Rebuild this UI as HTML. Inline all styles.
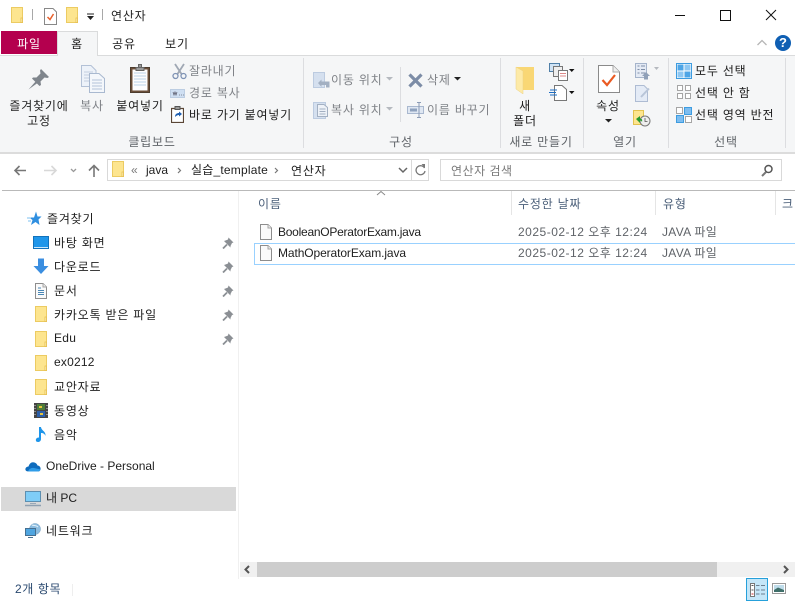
<!DOCTYPE html>
<html lang="ko"><head><meta charset="utf-8">
<style>
html,body{margin:0;padding:0;background:#fff}
#w{position:relative;width:795px;height:602px;overflow:hidden;background:#fff;font:12px/16px "Liberation Sans","Noto Sans CJK KR",sans-serif;color:#1e1e1e}
#w div,#w svg{position:absolute}
.t{position:absolute;white-space:nowrap;line-height:16px;height:16px;margin-top:-7px;letter-spacing:.8px}
.l{letter-spacing:0;margin-top:-8px}
.c{transform:translateX(-50%)}
.g{color:#7f8287}
.m{color:#5f6368}
.sep{width:1px;background:#dcdde0}
</style></head><body>
<div id="w">
<svg width="0" height="0" style="position:absolute"><defs>
<g id="fo"><path d="M.5.5H11.5V15.5H.5Z" fill="#fde58f" stroke="#eccb62"/><path d="M10 11v4.500h1.500V11z" fill="#fff3c0" stroke="#e6bf4f" stroke-width=".8"/></g>
<g id="pin"><path d="M6.500.5 11.500 5.500 10 6 8.500 9 8.500 10.500 2 4 3.500 3.500 6 2.500Z" fill="#8b8f94"/><path d="M5 7.500 1 11.500" stroke="#8b8f94" stroke-width="1.800"/></g>
<g id="doc"><path d="M.5.5H8L11.500 4V15.500H.5Z" fill="#fafafa" stroke="#8d8d8d"/><path d="M8 .5V4H11.500" fill="#eee" stroke="#a5a5a5"/></g>
</defs></svg>

<!-- title bar -->
<svg style="left:11px;top:7px" width="12" height="16"><use href="#fo"/></svg>
<div class="sep" style="left:32px;top:9px;height:11px;background:#a8a8a8"></div>
<svg style="left:44px;top:8px" width="13" height="17"><path d="M.5.5H9L12.500 4V16.500H.5Z" fill="#fff" stroke="#888"/><path d="M3.500 9 6 11.500 9.500 6" fill="none" stroke="#e8602c" stroke-width="1.500"/></svg>
<svg style="left:66px;top:7px" width="12" height="16"><use href="#fo"/></svg>
<svg style="left:86px;top:13px" width="9" height="8"><path d="M1 1H8" stroke="#222"/><path d="M1 3H8L4.500 7Z" fill="#222"/></svg>
<div class="sep" style="left:102px;top:9px;height:11px;background:#a8a8a8"></div>
<span class="t" style="left:111px;top:15px;color:#222">연산자</span>
<svg style="left:670px;top:5px" width="115" height="20"><path d="M5 10.500H15" stroke="#111"/><path d="M50.500 5.500H60.500V15.500H50.500Z" fill="none" stroke="#111"/><path d="M96 5 106 15M106 5 96 15" stroke="#111"/></svg>

<!-- tabs -->
<div style="left:1px;top:31px;width:56px;height:23px;background:#b4004e"></div>
<span class="t c" style="left:29px;top:43px;color:#fff">파일</span>
<div style="left:57px;top:31px;width:39px;height:24px;background:#f5f6f7;border:1px solid #dadbdc;border-bottom:0;z-index:2"></div>
<span class="t c" style="left:77px;top:43px;z-index:3">홈</span>
<span class="t c" style="left:124px;top:43px">공유</span>
<span class="t c" style="left:177px;top:43px">보기</span>
<svg style="left:756px;top:38px" width="12" height="9"><path d="M1.500 7 6 2.500 10.500 7" fill="none" stroke="#b5b5b5" stroke-width="1.300"/></svg>
<div style="left:775px;top:35px;width:16px;height:16px;border-radius:50%;background:#0f5fb3;color:#fff;font:bold 13px/16px 'Liberation Sans',sans-serif;text-align:center">?</div>

<!-- ribbon -->
<div style="left:0;top:55px;width:795px;background:#f5f6f7;border-top:1px solid #dadbdc;border-bottom:2px solid #dcdcdc;box-sizing:border-box;height:99px"></div>
<div class="sep" style="left:303px;top:58px;height:90px"></div>
<div class="sep" style="left:500px;top:58px;height:90px"></div>
<div class="sep" style="left:583px;top:58px;height:90px"></div>
<div class="sep" style="left:668px;top:58px;height:90px"></div>
<div class="sep" style="left:785px;top:58px;height:90px"></div>
<div class="sep" style="left:400px;top:67px;height:55px"></div>

<svg style="left:28px;top:68px" width="22" height="22"><path d="M13 1 21 9 19.500 10 16.500 9.500 12.500 13.500 13 17 11.500 18 4 10.500 5 9.500 8.500 9.500 12.500 5.500 12 2.500Z" fill="#7f858c"/><path d="M8 13 .5 21.500 9.500 15Z" fill="#7f858c"/></svg>
<svg style="left:80px;top:64px" width="26" height="30"><path d="M1.500 1.500H11L16 6.500V22.500H1.500Z" fill="#edf2f9" stroke="#b3c1d6"/><path d="M4 8H13M4 11H13M4 14H13M4 17H13" stroke="#c3cfe0"/><path d="M9.500 9.500H19L24.500 14.500V28.500H9.500Z" fill="#f4f7fb" stroke="#a9b9d0"/><path d="M12 16H22M12 19H22M12 22H22M12 25H22" stroke="#b5c3d8"/></svg>
<svg style="left:129px;top:63px" width="22" height="31"><path d="M1.500 4.500H20.500V29.500H1.500Z" fill="#6b4f3a" stroke="#4d3d2f"/><path d="M3.500 6.500H18.500V27.500H3.500Z" fill="#fdfdff"/><path d="M5 10H17M5 13H17M5 16H17M5 19H17M5 22H17" stroke="#bcd2ea"/><path d="M7 4.500H15V7.500H7ZM9.500 1.500H12.500V4.500H9.500Z" fill="#9a9a9a" stroke="#666"/></svg>
<svg style="left:172px;top:63px" width="15" height="17"><path d="M3 1 9.500 11M12 1 5.500 11" stroke="#a0a8b4" stroke-width="1.800"/><circle cx="3.500" cy="13" r="2.500" fill="none" stroke="#7f93b5" stroke-width="1.300"/><circle cx="11.500" cy="13" r="2.500" fill="none" stroke="#7f93b5" stroke-width="1.300"/></svg>
<svg style="left:170px;top:89px" width="15" height="9"><rect x=".5" y=".5" width="14" height="8" fill="#cfdff2" stroke="#bccde2"/><path d="M3 3l1 3 1-3 1 3 1-3M9 6h.8M11 6h.8M13 6h.8" fill="none" stroke="#556" stroke-width=".7"/></svg>
<svg style="left:171px;top:106px" width="13" height="17"><path d="M.5 2.500H12.500V16.500H.5Z" fill="#fff" stroke="#5a4636" stroke-width="1.200"/><path d="M4 .5H9V3.500H4Z" fill="#999" stroke="#555"/><path d="M4 11C4 8 6 7 8 7V5.500L11 8 8 10.500V9C6.500 9 5 10 4 11Z" fill="#1f5fb0"/></svg>

<span class="t c" style="left:39px;top:105px">즐겨찾기에</span>
<span class="t c" style="left:39px;top:120px">고정</span>
<span class="t c g" style="left:92px;top:105px">복사</span>
<span class="t c" style="left:140px;top:105px">붙여넣기</span>
<span class="t g" style="left:189px;top:70px">잘라내기</span>
<span class="t g" style="left:189px;top:92px">경로 복사</span>
<span class="t" style="left:189px;top:114px">바로 가기 붙여넣기</span>
<span class="t c m" style="left:152px;top:141px">클립보드</span>

<svg style="left:313px;top:72px" width="17" height="17"><path d="M.5.5H11.500V15.500H.5Z" fill="#d5e0ef" stroke="#bccbe0"/><path d="M13 9.500H16.500V15.500H13ZM5 11 8.500 7.500V9.500H13V13H8.500V15Z" fill="#a3b0c2"/></svg>
<span class="t g" style="left:331px;top:79px">이동 위치</span>
<svg style="left:386px;top:77px" width="7" height="4"><path d="M0 0H7L3.500 3.500Z" fill="#b5b9bf"/></svg>
<svg style="left:313px;top:102px" width="17" height="17"><path d="M.5.5H12.500V16.500H.5Z" fill="#d5e0ef" stroke="#bccbe0"/><path d="M4.500 2.500H11L14.500 5.500V14.500H4.500Z" fill="#eef2f8" stroke="#a3b0c2"/><path d="M6.500 7H12.500M6.500 9.500H12.500M6.500 12H12.500" stroke="#a3b0c2"/></svg>
<span class="t g" style="left:331px;top:109px">복사 위치</span>
<svg style="left:386px;top:107px" width="7" height="4"><path d="M0 0H7L3.500 3.500Z" fill="#b5b9bf"/></svg>
<svg style="left:408px;top:73px" width="15" height="15"><path d="M1.500 1.500 13.500 13.500M13.500 1.500 1.500 13.500" stroke="#7c8ca6" stroke-width="3.200"/></svg>
<span class="t g" style="left:427px;top:79px">삭제</span>
<svg style="left:454px;top:77px" width="7" height="4"><path d="M0 0H7L3.500 3.500Z" fill="#222"/></svg>
<svg style="left:407px;top:102px" width="17" height="16"><path d="M.5 4.500H16.500V11.500H.5Z" fill="#dfe7f2" stroke="#a9b8cf"/><path d="M3 6.500H10V9.500H3Z" fill="#8fa2bd"/><path d="M10 .5H14M12 .5V15.500M10 15.500H14" stroke="#8b9bb5"/></svg>
<span class="t g" style="left:427px;top:109px">이름 바꾸기</span>
<span class="t c m" style="left:401px;top:141px">구성</span>

<svg style="left:515px;top:66px" width="20" height="28"><path d="M1 1H19V24H8Z" fill="#f9d775"/><path d="M1 1 8 5V28L1 23Z" fill="#fdeaa8" stroke="#ecd183" stroke-width=".5"/></svg>
<span class="t c" style="left:525px;top:105px">새</span>
<span class="t c" style="left:525px;top:120px">폴더</span>
<span class="t c m" style="left:541px;top:141px">새로 만들기</span>
<svg style="left:549px;top:63px" width="26" height="18"><rect x=".5" y=".5" width="10" height="8" fill="#cfe3f5" stroke="#4f7fa8"/><rect x="4.500" y="3.500" width="9" height="10" fill="#eee" stroke="#777"/><rect x="9.500" y="7.500" width="9" height="10" fill="#fff" stroke="#777"/><path d="M11 10.500H17M11 13H17" stroke="#d88"/><path d="M20 6H25.500L22.750 9Z" fill="#111"/></svg>
<svg style="left:549px;top:85px" width="26" height="16"><path d="M5.500.5H13L17.500 4.500V15.500H5.500Z" fill="#fff" stroke="#777"/><path d="M1 5H8M0 7.500H7M1 10H8" stroke="#1e6fc5"/><path d="M20 6H25.500L22.750 9Z" fill="#111"/></svg>

<svg style="left:598px;top:65px" width="22" height="29"><path d="M.5.5H15L21.500 7V27.500H.5Z" fill="#fff" stroke="#8a8a8a"/><path d="M15 .5V7H21.500" fill="#eee" stroke="#aaa"/><path d="M4.500 15 9 20 17 10" fill="none" stroke="#ea5a22" stroke-width="2.200"/></svg>
<span class="t c" style="left:608px;top:105px">속성</span>
<svg style="left:605px;top:119px" width="7" height="4"><path d="M0 0H7L3.500 3.500Z" fill="#222"/></svg>
<svg style="left:635px;top:63px" width="25" height="17"><path d="M.5.5H11.500V14.500H.5Z" fill="#e4eaf4" stroke="#a5b4cb"/><path d="M2.500 3H4.500M2.500 6.500H4.500M2.500 10H4.500M6 3H10M6 6.500H10M6 10H10" stroke="#7e8ea7"/><path d="M7 13 11 9 15 13H13V16.500H9V13Z" fill="#8fa0b8"/><path d="M19 4H24L21.500 7Z" fill="#b5b9bf"/></svg>
<svg style="left:635px;top:85px" width="17" height="18"><path d="M.5.5H9L12.500 4V16.500H.5Z" fill="#e4ebf6" stroke="#aebcd3"/><path d="M6 12 14 3.500" stroke="#b8c5d8" stroke-width="2"/></svg>
<svg style="left:633px;top:110px" width="18" height="17"><path d="M.5.5H10.500V14.500H.5Z" fill="#fde58f" stroke="#e3c24f"/><circle cx="12" cy="11" r="5" fill="#eee" stroke="#777"/><path d="M12 8V11.500H14.500" fill="none" stroke="#555" stroke-width=".8"/><path d="M3 9 7 6V8.500C9 8.500 9.500 10 9 12 8.500 11 8 10.500 7 10.500V13Z" fill="#2a9a2f"/></svg>
<span class="t c m" style="left:625px;top:141px">열기</span>

<svg style="left:676px;top:63px" width="16" height="16"><rect x=".5" y=".5" width="15" height="15" fill="#fff" stroke="#3d9ce0"/><rect x="1.500" y="1.500" width="6" height="6" fill="#4ea5e6"/><rect x="8.500" y="1.500" width="6" height="6" fill="#8ec7f2"/><rect x="1.500" y="8.500" width="6" height="6" fill="#8ec7f2"/><rect x="8.500" y="8.500" width="6" height="6" fill="#4ea5e6"/></svg>
<svg style="left:677px;top:85px" width="15" height="15"><g fill="#fff" stroke="#a5a5a5"><rect x=".5" y=".5" width="5" height="5"/><rect x="8.500" y=".5" width="5" height="5"/><rect x=".5" y="8.500" width="5" height="5"/><rect x="8.500" y="8.500" width="5" height="5"/></g></svg>
<svg style="left:676px;top:107px" width="16" height="16"><rect x=".5" y=".5" width="6" height="6" fill="#fff" stroke="#a5a5a5"/><rect x="8.500" y=".5" width="7" height="7" fill="#7dbdf0" stroke="#3d9ce0"/><rect x=".5" y="8.500" width="7" height="7" fill="#7dbdf0" stroke="#3d9ce0"/><rect x="9.500" y="9.500" width="6" height="6" fill="#fff" stroke="#a5a5a5"/></svg>
<span class="t" style="left:695px;top:70px">모두 선택</span>
<span class="t" style="left:695px;top:92px">선택 안 함</span>
<span class="t" style="left:695px;top:114px">선택 영역 반전</span>
<span class="t c m" style="left:726px;top:141px">선택</span>

<!-- nav -->
<svg style="left:13px;top:163px" width="92" height="15"><path d="M2 7.500H13M6.500 3 2 7.500 6.500 12" fill="none" stroke="#777" stroke-width="1.600"/><path d="M31 7.500H43M38.500 3 43 7.500 38.500 12" fill="none" stroke="#d8d8d8" stroke-width="1.600"/><path d="M58 6 60.500 8.500 63 6" fill="none" stroke="#999" stroke-width="1.300"/><path d="M81 14V3M76 7.500 81 2.500 86 7.500" fill="none" stroke="#777" stroke-width="1.600"/></svg>
<div style="left:107px;top:159px;width:322px;height:22px;border:1px solid #d9d9d9;box-sizing:border-box"></div>
<div class="sep" style="left:411px;top:160px;height:20px;background:#d9d9d9"></div>
<svg style="left:112px;top:161px" width="12" height="16"><use href="#fo"/></svg>
<span class="t l" style="left:131px;top:170px;color:#777">«</span>
<span class="t l" style="left:146px;top:170px">java</span>
<svg style="left:177px;top:167px" width="5" height="7"><path d="M1 1 3.500 3.500 1 6" fill="none" stroke="#777" stroke-width="1.200"/></svg>
<span class="t l" style="left:191px;top:170px;letter-spacing:.2px">실습_template</span>
<svg style="left:274px;top:167px" width="5" height="7"><path d="M1 1 3.500 3.500 1 6" fill="none" stroke="#777" stroke-width="1.200"/></svg>
<span class="t" style="left:291px;top:170px">연산자</span>
<svg style="left:398px;top:167px" width="10" height="7"><path d="M1 1 5 5 9 1" fill="none" stroke="#666" stroke-width="1.500"/></svg>
<svg style="left:414px;top:163px" width="13" height="14"><path d="M10.500 5A4.500 4.500 0 1 0 11 8" fill="none" stroke="#777" stroke-width="1.300"/><path d="M7.500 1 11 1V5Z" fill="#777"/></svg>
<div style="left:440px;top:159px;width:342px;height:22px;border:1px solid #d9d9d9;box-sizing:border-box"></div>
<span class="t" style="left:451px;top:170px;color:#7a7a7a;letter-spacing:.5px">연산자 검색</span>
<svg style="left:760px;top:164px" width="14" height="13"><circle cx="8.500" cy="5" r="3.500" fill="none" stroke="#555" stroke-width="1.500"/><path d="M6 8 2 12" stroke="#777" stroke-width="2"/></svg>
<div style="left:2px;top:190px;width:793px;height:1px;background:#b9b9b9"></div>

<!-- sidebar -->
<div style="left:238px;top:191px;width:1px;height:388px;background:#f0f0f0"></div>
<div style="left:1px;top:487px;width:235px;height:24px;background:#d9d9d9"></div>
<svg style="left:27px;top:211px" width="15" height="15"><path d="M9 .5 10.500 5.500H14.500L11.500 8.500 12.500 14 8.500 11 4 14 5.500 9 2 6.500H7Z" fill="#2f8fe0"/><path d="M0 7H4M1 10H4" stroke="#7dc0f2"/></svg>
<span class="t" style="left:47px;top:218px">즐겨찾기</span>
<svg style="left:33px;top:236px" width="16" height="13"><rect x=".5" y=".5" width="15" height="12" fill="#1f96ea" stroke="#1272bb"/><path d="M1 11.500H15" stroke="#cde8fb"/></svg>
<span class="t" style="left:54px;top:242px">바탕 화면</span>
<svg style="left:33px;top:258px" width="16" height="17"><path d="M5 .5H11V8H15.500L8 16 .5 8H5Z" fill="#3b8ee0"/></svg>
<span class="t" style="left:54px;top:266px">다운로드</span>
<svg style="left:35px;top:283px" width="12" height="16"><use href="#doc"/><path d="M3 5H6M3 7.500H9M3 9.500H9M3 11.500H9" stroke="#4a87b5"/></svg>
<span class="t" style="left:54px;top:290px">문서</span>
<svg style="left:35px;top:306px" width="12" height="16"><use href="#fo"/></svg>
<span class="t" style="left:54px;top:314px">카카오톡 받은 파일</span>
<svg style="left:35px;top:331px" width="12" height="16"><use href="#fo"/></svg>
<span class="t l" style="left:54px;top:338px;letter-spacing:.3px">Edu</span>
<svg style="left:35px;top:355px" width="12" height="16"><use href="#fo"/></svg>
<span class="t l" style="left:54px;top:362px;letter-spacing:.2px">ex0212</span>
<svg style="left:35px;top:379px" width="12" height="16"><use href="#fo"/></svg>
<span class="t" style="left:54px;top:386px">교안자료</span>
<svg style="left:34px;top:403px" width="14" height="15"><rect width="14" height="15" fill="#444"/><rect x="3" y="1" width="8" height="6" fill="#4d7c3a"/><rect x="3" y="8" width="8" height="6" fill="#2d5fa8"/><path d="M5 3h3v2H5zM6 10h3v2H6z" fill="#e8c53a"/><path d="M1 2v1M1 5v1M1 8v1M1 11v1M13 2v1M13 5v1M13 8v1M13 11v1" stroke="#ddd"/></svg>
<span class="t" style="left:54px;top:410px">동영상</span>
<svg style="left:35px;top:426px" width="12" height="17"><path d="M4 1H6C6.500 5 11 5 10.500 10 9.500 7.500 8 7 6 7V13C6 15.500 3.500 16.500 1.800 15.800.5 15 .5 13 2 12 3 11.400 3.800 11.500 4 11.700Z" fill="#1e95ea"/></svg>
<span class="t" style="left:54px;top:434px">음악</span>
<svg style="left:25px;top:461px" width="16" height="11"><path d="M3.500 10.500C1 10.500 0 9 .5 7.500 1 6 2.500 5.500 3.500 5.500 4.500 2 7 .5 9.500 1.500 11 2 12 3 12.500 4.500 14.500 4.500 16 6.500 15.500 8.500 15 10 14 10.500 13 10.500Z" fill="#0f6cbd"/><path d="M3 10.500C4 8 6 6.500 9 7L15.500 8.500C15 10 14 10.500 13 10.500Z" fill="#2f9ce8"/></svg>
<span class="t l" style="left:46px;top:466px">OneDrive - Personal</span>
<svg style="left:25px;top:491px" width="17" height="16"><rect x=".5" y=".5" width="15" height="10" fill="#7fcdf7" stroke="#5d8fb0"/><path d="M5 12.500H11" stroke="#9aa9b8"/><path d="M0 14.500H16" stroke="#8fa0b0" stroke-width="1.500"/></svg>
<span class="t l" style="left:46px;top:498px">내 PC</span>
<svg style="left:25px;top:523px" width="16" height="16"><circle cx="10" cy="6" r="5.500" fill="#8dbde0" stroke="#6f9cc0" stroke-width=".5"/><path d="M7 2C9 3 11 2 13 4" stroke="#e6f2fa" fill="none"/><rect x=".5" y="5.500" width="10" height="7" fill="#4fa5e0" stroke="#466f90"/><path d="M3 14.500H8" stroke="#466f90"/></svg>
<span class="t" style="left:46px;top:530px">네트워크</span>
<svg style="left:222px;top:237px" width="12" height="12"><use href="#pin"/></svg>
<svg style="left:222px;top:261px" width="12" height="12"><use href="#pin"/></svg>
<svg style="left:222px;top:285px" width="12" height="12"><use href="#pin"/></svg>
<svg style="left:222px;top:309px" width="12" height="12"><use href="#pin"/></svg>
<svg style="left:222px;top:333px" width="12" height="12"><use href="#pin"/></svg>

<!-- list header -->
<svg style="left:376px;top:190px" width="10" height="6"><path d="M1 5 5 1.500 9 5" fill="none" stroke="#888"/></svg>
<span class="t" style="left:258px;top:203px;color:#4c607a">이름</span>
<span class="t" style="left:518px;top:203px;color:#4c607a">수정한 날짜</span>
<span class="t" style="left:663px;top:203px;color:#4c607a">유형</span>
<span class="t" style="left:782px;top:203px;color:#4c607a">크</span>
<div class="sep" style="left:511px;top:191px;height:24px;background:#e5e5e5"></div>
<div class="sep" style="left:655px;top:191px;height:24px;background:#e5e5e5"></div>
<div class="sep" style="left:775px;top:191px;height:24px;background:#e5e5e5"></div>

<!-- files -->
<div style="left:254px;top:243px;width:545px;height:22px;border:1px solid #99d1ff;box-sizing:border-box"></div>
<svg style="left:260px;top:224px" width="12" height="16"><use href="#doc"/></svg>
<svg style="left:260px;top:245px" width="12" height="16"><use href="#doc"/></svg>
<span class="t l" style="left:278px;top:232px;letter-spacing:-.25px">BooleanOPeratorExam.java</span>
<span class="t l" style="left:278px;top:253px;letter-spacing:-.1px">MathOperatorExam.java</span>
<span class="t l m" style="left:518px;top:232px;letter-spacing:.5px">2025-02-12 오후 12:24</span>
<span class="t l m" style="left:518px;top:253px;letter-spacing:.5px">2025-02-12 오후 12:24</span>
<span class="t l m" style="left:662px;top:232px;letter-spacing:.3px">JAVA 파일</span>
<span class="t l m" style="left:662px;top:253px;letter-spacing:.3px">JAVA 파일</span>

<!-- scrollbar -->
<div style="left:240px;top:562px;width:555px;height:15px;background:#f0f0f0"></div>
<div style="left:257px;top:562px;width:460px;height:15px;background:#cdcdcd"></div>
<svg style="left:243px;top:565px" width="8" height="9"><path d="M6 1 2.500 4.500 6 8" fill="none" stroke="#555" stroke-width="2"/></svg>
<svg style="left:782px;top:565px" width="8" height="9"><path d="M2 1 5.500 4.500 2 8" fill="none" stroke="#555" stroke-width="2"/></svg>

<!-- status -->
<span class="t l" style="left:15px;top:589px;color:#2b4a70;letter-spacing:.6px">2개 항목</span>
<div class="sep" style="left:72px;top:584px;height:12px;background:#eee"></div>
<div style="left:746px;top:578px;width:22px;height:23px;background:#c4e6f8;border:1px solid #26a0da;box-sizing:border-box"></div>
<svg style="left:750px;top:583px" width="16" height="14"><rect x=".5" y=".5" width="4" height="13" fill="#fff" stroke="#777"/><path d="M1.500 2.500H3.500M1.500 7H3.500" stroke="#555"/><path d="M1.500 11H3.500" stroke="#c33"/><path d="M6 2.500H9.500M11 2.500H15M6 7H9.500M11 7H15M6 11H9.500M11 11H15" stroke="#6b7f90"/></svg>
<svg style="left:772px;top:583px" width="14" height="11"><rect x=".5" y=".5" width="13" height="10" fill="#fff" stroke="#999"/><rect x="2" y="2" width="10" height="7" fill="#bfdcea"/><path d="M2 7 6 4.500 12 7V9H2Z" fill="#3f6f6a"/></svg>
</div>
</body></html>
